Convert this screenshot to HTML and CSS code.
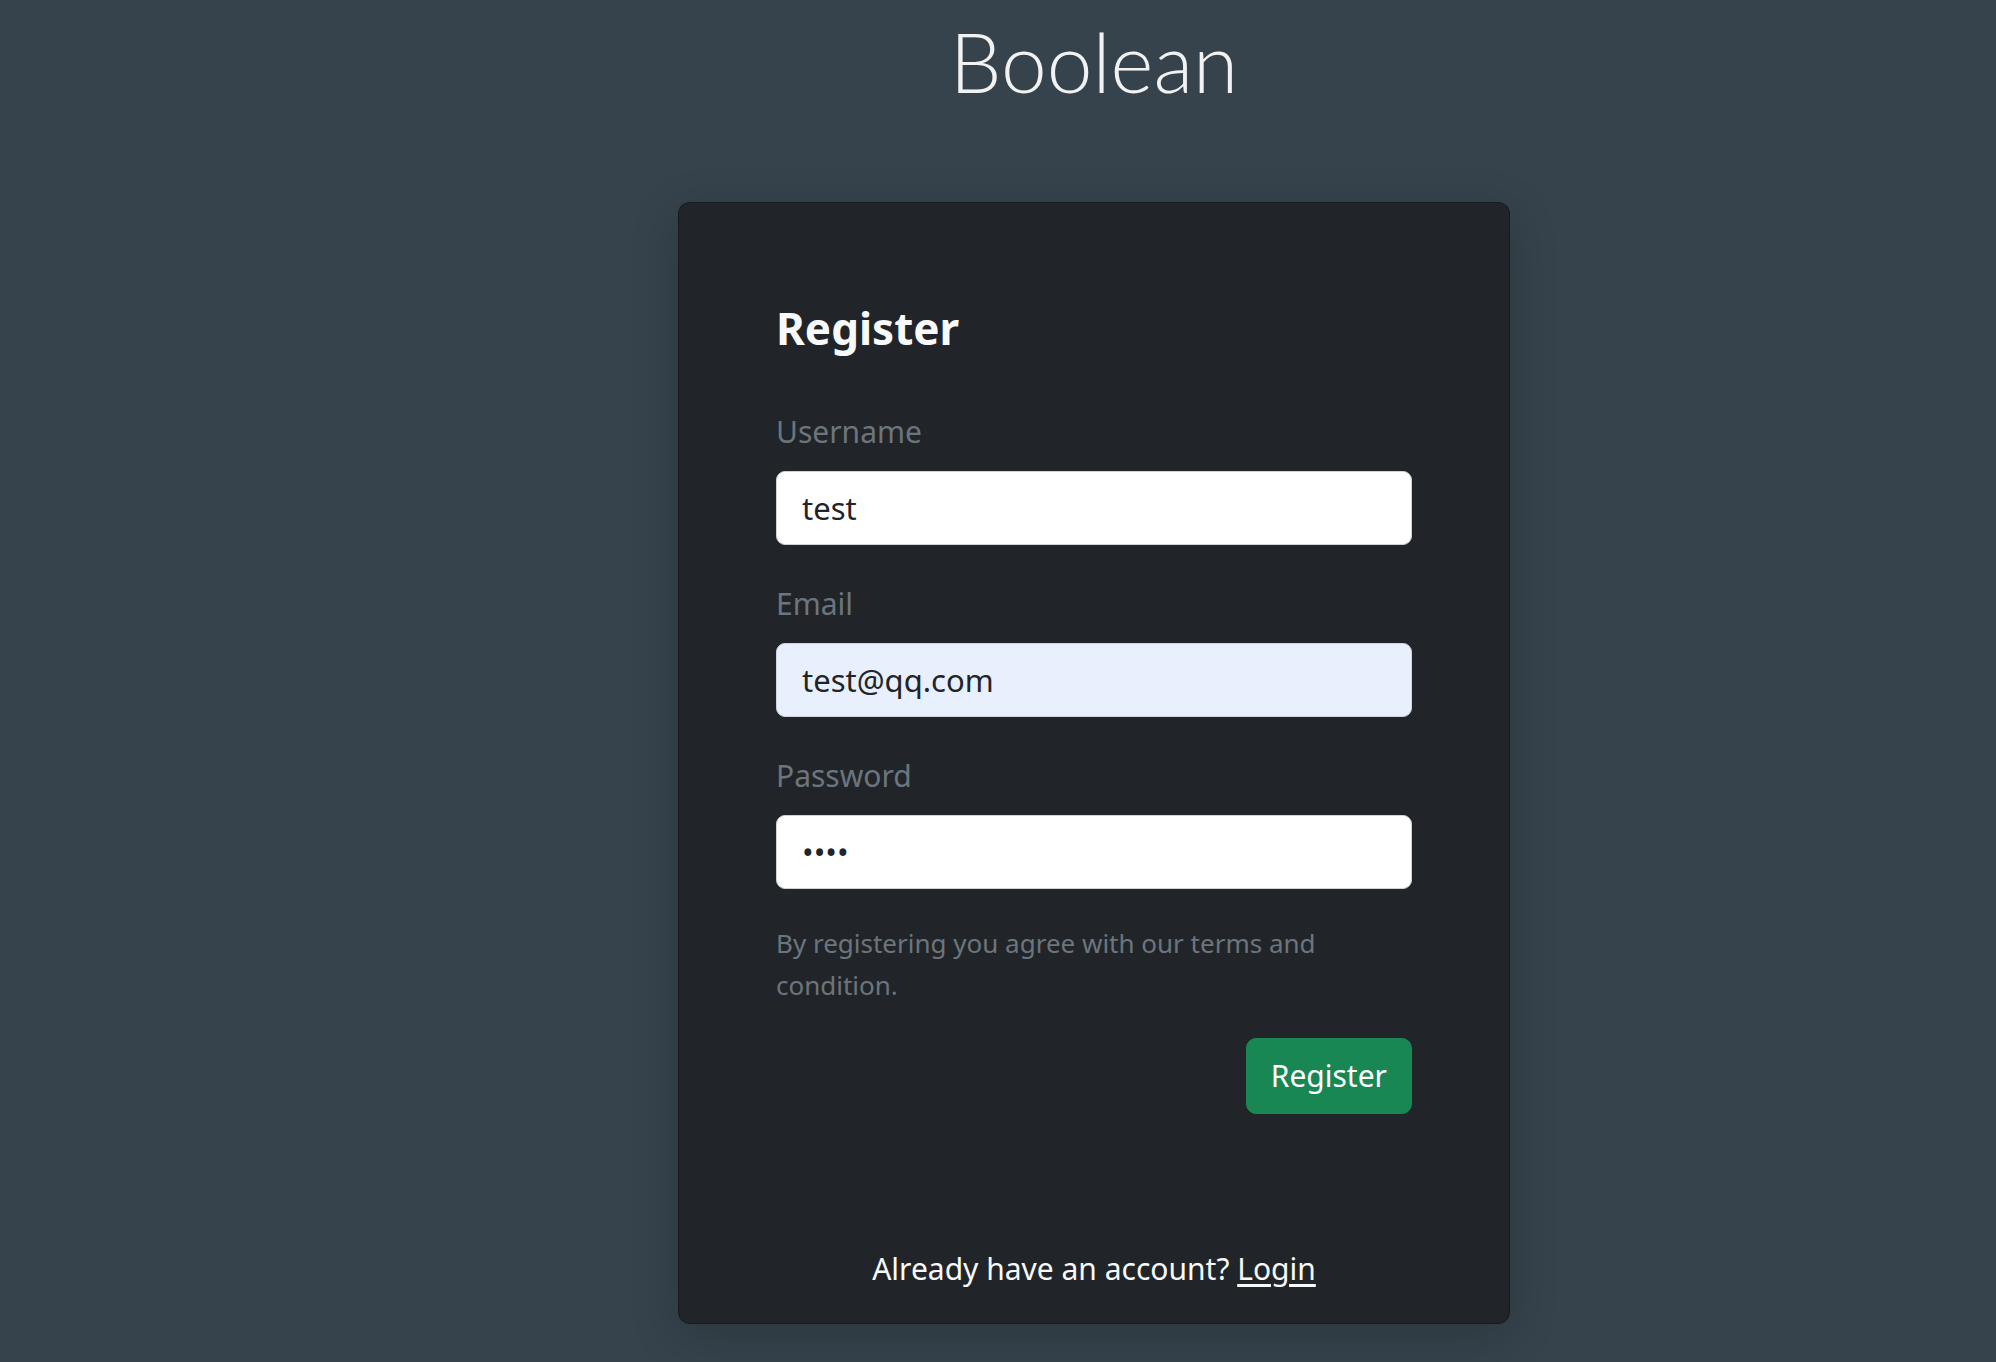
FILE: index.html
```html
<!DOCTYPE html>
<html lang="en">
<head>
<meta charset="utf-8">
<title>Boolean - Register</title>
<link rel="stylesheet" href="styles.css">
</head>
<body>
<div class="page">
  <h1 class="brand">Boolean</h1>
  <div class="card">
    <div class="card-body">
      <h2 class="card-title">Register</h2>
      <form class="form">
        <div class="group">
          <label class="label" for="username">Username</label>
          <input class="control" id="username" type="text" value="test">
        </div>
        <div class="group">
          <label class="label" for="email">Email</label>
          <input class="control autofill" id="email" type="email" value="test@qq.com">
        </div>
        <div class="group">
          <label class="label" for="password">Password</label>
          <input class="control" id="password" type="password" value="test">
        </div>
        <p class="terms">By registering you agree with our terms and condition.</p>
        <div class="actions">
          <button class="btn-success" type="button">Register</button>
        </div>
      </form>
    </div>
    <div class="card-footer">
      Already have an account? <a class="link" href="#">Login</a>
    </div>
  </div>
</div>
</body>
</html>
```

FILE: styles.css
```css
* { box-sizing: border-box; }

html, body {
  margin: 0;
  padding: 0;
}

body {
  background: #36434c;
  font-family: "Noto Sans", Lato, sans-serif;
  min-height: 1362px;
}

.page {
  display: flex;
  flex-direction: column;
  align-items: center;
  padding: 12px 0 0 192px;
}

.brand {
  margin: 0;
  font-family: Lato, "Noto Sans", sans-serif;
  font-size: 82px;
  line-height: 98px;
  font-weight: 300;
  color: #f2f2f2;
}

.card {
  margin-top: 92px;
  width: 832px;
  background: #212529;
  border: 1px solid rgba(0, 0, 0, 0.25);
  border-radius: 12px;
  box-shadow: 0 12px 48px rgba(0, 0, 0, 0.18);
}

.card-body {
  padding: 97px 97px 0 97px;
}

.card-title {
  margin: 0 0 51px 0;
  font-size: 44px;
  line-height: 57.6px;
  font-weight: 700;
  color: #f8f9fa;
}

.form {
  display: flex;
  flex-direction: column;
}

.group {
  display: flex;
  flex-direction: column;
  margin-bottom: 36px;
}

.label {
  font-size: 30px;
  line-height: 45px;
  margin-bottom: 17px;
  color: #6c757d;
}

.control {
  height: 74px;
  width: 100%;
  padding: 0 25px;
  font-family: inherit;
  font-size: 31px;
  color: #212529;
  background: #ffffff;
  border: 1.5px solid #ced4da;
  border-radius: 9px;
  outline: none;
}

.autofill {
  background: #e8f0fe;
}

.terms {
  margin: -3px 0 0 0;
  max-width: 580px;
  font-size: 26px;
  line-height: 42px;
  color: #6c757d;
}

.actions {
  display: flex;
  justify-content: flex-end;
  margin-top: 32px;
}

.btn-success {
  height: 76px;
  padding: 0 24px;
  font-family: inherit;
  font-size: 30px;
  color: #ffffff;
  background: #198754;
  border: 1px solid #198754;
  border-radius: 10px;
}

.card-footer {
  margin-top: 132px;
  padding-bottom: 32px;
  text-align: center;
  font-size: 30px;
  line-height: 45px;
  color: #f8f9fa;
}

.link {
  color: #f8f9fa;
  text-decoration: underline;
  text-underline-offset: 4px;
}
```
